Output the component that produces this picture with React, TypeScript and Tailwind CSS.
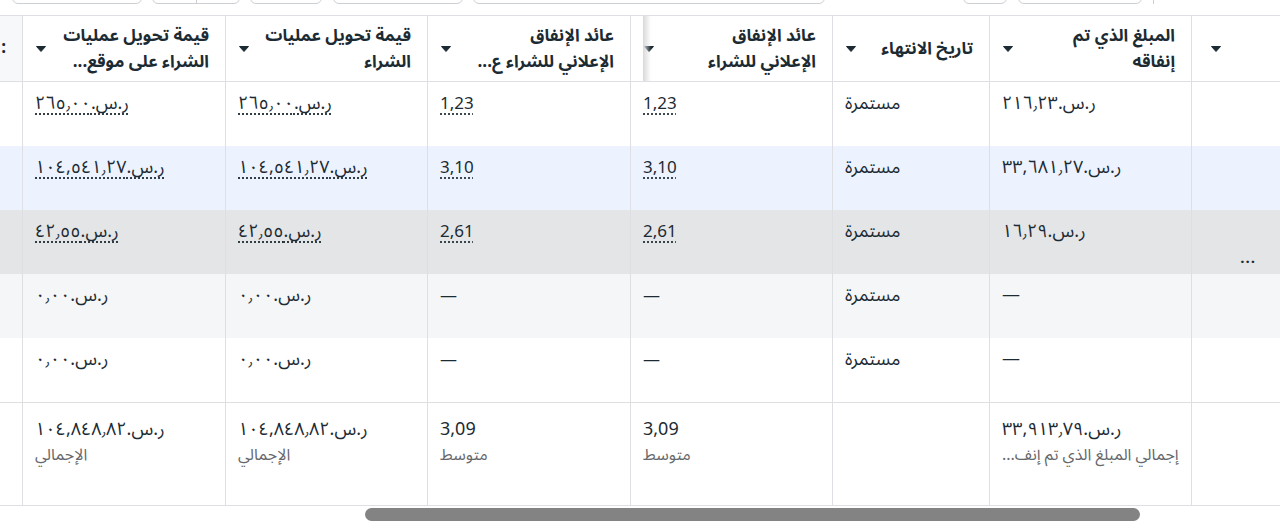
import React from 'react';

const cols = 'grid grid-cols-[89px_202px_157px_202px_203px_202px_203px_22px]';
const line = 'border-l border-[#dddfe2]';

const rows = [
  { bg: 'bg-white', value: '٢٦٥٫٠٠', roas: '1,23', spend: '٢١٦٫٢٣', dotted: true },
  { bg: 'bg-[#ecf3ff]', value: '١٠٤,٥٤١٫٢٧', roas: '3,10', spend: '٣٣,٦٨١٫٢٧', dotted: true },
  { bg: 'bg-[#e4e5e7]', value: '٤٢٫٥٥', roas: '2,61', spend: '١٦٫٢٩', dotted: true, more: true },
  { bg: 'bg-[#f5f6f7]', value: '٠٫٠٠', roas: '—', spend: '—', dotted: false },
  { bg: 'bg-white', value: '٠٫٠٠', roas: '—', spend: '—', dotted: false },
];

function Caret() {
  return (
    <svg width="10" height="6" viewBox="0 0 10 6" className="shrink-0">
      <path d="M0.5 0.5h9L5 5.5z" fill="#1c2b33" stroke="#1c2b33" strokeLinejoin="round" />
    </svg>
  );
}

function HeadCell({ lines, shade }: { lines: string[]; shade?: boolean }) {
  return (
    <div className={`relative flex items-center justify-between pr-4 pl-[13px] ${line}`}>
      <div className="text-[17px] leading-[26px] font-bold text-[#1c2b33]">
        {lines.map((t) => (
          <div key={t} className="whitespace-nowrap">{t}</div>
        ))}
      </div>
      <Caret />
      {shade && (
        <div className="absolute top-0 bottom-0 left-[12px] w-[8px] bg-linear-to-r from-[#d9d9d9] to-transparent" />
      )}
    </div>
  );
}

function Money({ v, dotted }: { v: string; dotted: boolean }) {
  const text = v === '—' ? '—' : `ر.س.‏${v}`;
  return (
    <span className={dotted ? 'underline decoration-dotted underline-offset-[5px] decoration-[#1c2b33]' : ''}>
      {text}
    </span>
  );
}

function Roas({ v, dotted }: { v: string; dotted: boolean }) {
  return (
    <span className={`text-[17px] ${dotted ? 'underline decoration-dotted underline-offset-[5px]' : ''}`}>{v}</span>
  );
}

function Cell({ children }: { children?: React.ReactNode }) {
  return <div className={`px-3 pt-[9px] text-left text-[18px] leading-6 ${line}`}>{children}</div>;
}

function Total({ value, label }: { value: string; label: string }) {
  return (
    <div className={`px-3 pt-[12px] text-left ${line}`}>
      <div className="text-[18px] leading-[28px]">{value}</div>
      <div className="text-[16px] leading-[24px] text-[#65676b] whitespace-nowrap">{label}</div>
    </div>
  );
}

export default function App() {
  return (
    <div className="w-[1280px] h-[531px] overflow-hidden bg-white text-[#1c2b33] font-['Noto_Sans_Arabic','Noto_Sans','DejaVu_Sans',sans-serif]">
      {/* toolbar, only the bottom of the buttons shows */}
      <div className="h-[15px] overflow-hidden">
        <div className="flex -mt-[32px] pl-[12px]" dir="ltr">
          <div className="h-[36px] w-[130px] rounded-md border border-[#ccd0d5]" />
          <div className="ml-[10px] h-[36px] w-[88px] rounded-md border border-[#ccd0d5] flex">
            <div className="w-[44px] border-r border-[#ccd0d5]" />
          </div>
          <div className="ml-[10px] h-[36px] w-[72px] rounded-md border border-[#ccd0d5]" />
          <div className="ml-[11px] h-[36px] w-[130px] rounded-md border border-[#ccd0d5]" />
          <div className="ml-[10px] h-[36px] w-[352px] rounded-md border border-[#ccd0d5]" />
          <div className="ml-[138px] h-[36px] w-[44px] rounded-md border border-[#ccd0d5]" />
          <div className="ml-[11px] h-[36px] w-[124px] rounded-md border border-[#ccd0d5]" />
          <div className="ml-[11px] h-[36px] w-px bg-[#ccd0d5]" />
        </div>
      </div>

      <div dir="rtl">
        {/* header */}
        <div className={`${cols} h-[67px] border-y border-[#dddfe2] bg-white`}>
          <div className={`flex items-center justify-end pl-[19px] ${line}`}>
            <Caret />
          </div>
          <HeadCell lines={['المبلغ الذي تم', 'إنفاقه']} />
          <HeadCell lines={['تاريخ الانتهاء']} />
          <HeadCell lines={['عائد الإنفاق', 'الإعلاني للشراء']} shade />
          <HeadCell lines={['عائد الإنفاق', 'الإعلاني للشراء ع...']} />
          <HeadCell lines={['قيمة تحويل عمليات', 'الشراء']} />
          <HeadCell lines={['قيمة تحويل عمليات', 'الشراء على موقع...']} />
          <div className="bg-[#f7f8fa] flex items-center pr-[16px] font-bold text-[17px]">:</div>
        </div>

        {/* body rows */}
        {rows.map((r, i) => (
          <div key={i} className={`${cols} h-16 ${r.bg}`}>
            <div className={`flex items-end justify-start pr-[24px] pb-[6px] ${line}`}>
              {r.more && <span className="font-bold text-[15px] tracking-[1px] leading-5">...</span>}
            </div>
            <Cell>
              <Money v={r.spend} dotted={false} />
            </Cell>
            <Cell>مستمرة</Cell>
            <Cell>
              <Roas v={r.roas} dotted={r.dotted} />
            </Cell>
            <Cell>
              <Roas v={r.roas} dotted={r.dotted} />
            </Cell>
            <Cell>
              <Money v={r.value} dotted={r.dotted} />
            </Cell>
            <Cell>
              <Money v={r.value} dotted={r.dotted} />
            </Cell>
            <div />
          </div>
        ))}

        {/* totals */}
        <div className={`${cols} h-[104px] border-y border-[#dddfe2] bg-white`}>
          <div className={line} />
          <Total value="ر.س.‏٣٣,٩١٣٫٧٩" label="إجمالي المبلغ الذي تم إنف..." />
          <div className={line} />
          <Total value="3,09" label="متوسط" />
          <Total value="3,09" label="متوسط" />
          <Total value="ر.س.‏١٠٤,٨٤٨٫٨٢" label="الإجمالي" />
          <Total value="ر.س.‏١٠٤,٨٤٨٫٨٢" label="الإجمالي" />
          <div />
        </div>
      </div>

      {/* horizontal scrollbar */}
      <div className="pt-[2px]">
        <div className="ml-[365px] h-[13px] w-[775px] rounded-full bg-[#838383]" />
      </div>
    </div>
  );
}
